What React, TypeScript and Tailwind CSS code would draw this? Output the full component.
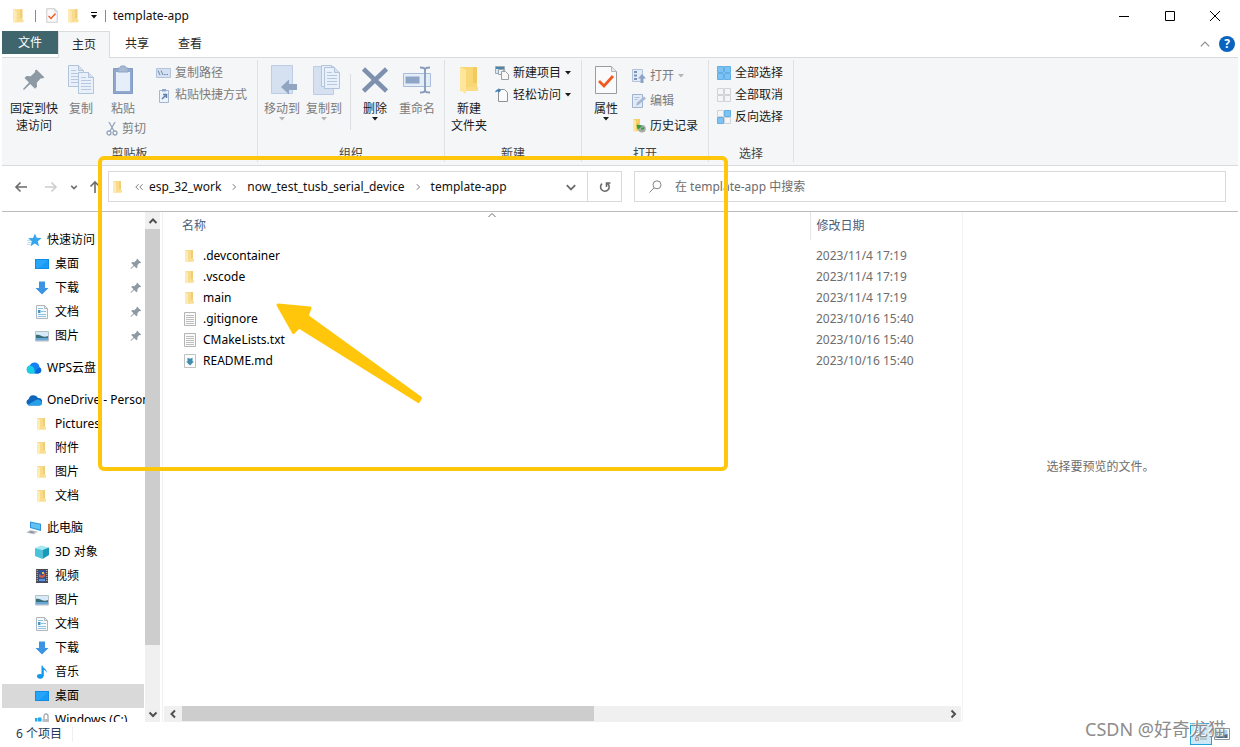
import { useState } from "react";
import type { ReactNode } from "react";

type IconName =
  | "star" | "desktop" | "download" | "doc" | "picture" | "wps" | "onedrive"
  | "folder" | "pc" | "cube" | "video" | "music" | "drive";

interface TreeItem {
  label: string;
  icon: IconName;
  root?: boolean;
  pinned?: boolean;
  selected?: boolean;
}

const tree: TreeItem[][] = [
  [
    { label: "快速访问", icon: "star", root: true },
    { label: "桌面", icon: "desktop", pinned: true },
    { label: "下载", icon: "download", pinned: true },
    { label: "文档", icon: "doc", pinned: true },
    { label: "图片", icon: "picture", pinned: true },
  ],
  [{ label: "WPS云盘", icon: "wps", root: true }],
  [
    { label: "OneDrive - Personal", icon: "onedrive", root: true },
    { label: "Pictures", icon: "folder" },
    { label: "附件", icon: "folder" },
    { label: "图片", icon: "folder" },
    { label: "文档", icon: "folder" },
  ],
  [
    { label: "此电脑", icon: "pc", root: true },
    { label: "3D 对象", icon: "cube" },
    { label: "视频", icon: "video" },
    { label: "图片", icon: "picture" },
    { label: "文档", icon: "doc" },
    { label: "下载", icon: "download" },
    { label: "音乐", icon: "music" },
    { label: "桌面", icon: "desktop", selected: true },
    { label: "Windows (C:)", icon: "drive" },
  ],
];

const files = [
  { name: ".devcontainer", kind: "folder", date: "2023/11/4 17:19" },
  { name: ".vscode", kind: "folder", date: "2023/11/4 17:19" },
  { name: "main", kind: "folder", date: "2023/11/4 17:19" },
  { name: ".gitignore", kind: "text", date: "2023/10/16 15:40" },
  { name: "CMakeLists.txt", kind: "text", date: "2023/10/16 15:40" },
  { name: "README.md", kind: "md", date: "2023/10/16 15:40" },
];

/* ---------- icons ---------- */

function FolderIcon({ className = "size-4" }: { className?: string }) {
  return (
    <svg viewBox="0 0 16 16" className={className}>
      <path d="M3 2h8v11.500H3z" fill="#f8dc8b" />
      <path d="M9 2h2v8H9z" fill="#f1cd74" />
      <path d="M3 2l3 1.500v11L3 13.500z" fill="#fdeab4" />
      <path d="M6 11h6v2.500H6z" fill="#f9df95" />
    </svg>
  );
}

function TextFileIcon() {
  return (
    <svg viewBox="0 0 16 16" className="size-4">
      <path d="M2.500 1.500h11v13h-11z" fill="#fafafa" stroke="#b4b4b4" />
      <path d="M4 4.500h8M4 6.500h8M4 8.500h8M4 10.500h8M4 12.500h8" stroke="#bdbdbd" />
    </svg>
  );
}

function MarkdownFileIcon() {
  return (
    <svg viewBox="0 0 16 16" className="size-4">
      <path d="M2.500 1.500h11v13h-11z" fill="#fdfdfd" stroke="#c0c0c0" />
      <path d="M5.500 4.500l1.500 1h2l1.500-1v4h1.500L8 12.500 4 8.500h1.500z" fill="#3f8cac" />
    </svg>
  );
}

function PinIcon({ className = "size-3" }: { className?: string }) {
  return (
    <svg viewBox="0 0 24 24" className={className} fill="#8d9aa3">
      <path d="M14.500 1.500l8 8-2.500 1-1.200-.3-4 4.500.2 4-2 2-4.800-4.800L2 22l-1-1 6-6.500-4.500-4.600 2-1.800 4.200.2 4.500-4.200-.4-1.300z" />
    </svg>
  );
}

function TreeIcon({ name }: { name: IconName }) {
  if (name === "folder") return <FolderIcon />;
  return (
    <svg viewBox="0 0 16 16" className="size-4 shrink-0">
      {name === "star" && (
        <>
          <path d="M9 1.500l1.700 4.200 5 .3-3.900 3.200 1.200 5-4.200-2.600-4.300 2.600 1.300-5L2 6.300l5-.4z" fill="#35a5ee" />
          <path d="M1 8.500h4M1.500 10.500h3.500M1 12.500h3" stroke="#a5d8f8" strokeWidth=".8" />
        </>
      )}
      {name === "desktop" && (
        <>
          <path d="M1 3h14v10H1z" fill="#0d8ce8" />
          <path d="M2 4h12v8H2z" fill="#26a5fb" />
          <path d="M14 4v8H5z" fill="#189af5" />
        </>
      )}
      {name === "download" && <path d="M5 1.500h6V8h3.500L8 14.500 1.500 8H5z" fill="#3a93e3" />}
      {name === "doc" && (
        <>
          <path d="M2.500 1.500h8l3 3v10h-11z" fill="#f7f9fa" stroke="#b0b6ba" />
          <path d="M10.500 1.500v3h3" fill="none" stroke="#b0b6ba" />
          <path d="M4 4.500h5M7 7.500h5M4 10.500h8M4 12.500h8" stroke="#8cc4e8" />
          <path d="M4 6h2.500v3H4z" fill="#3b9ad6" />
        </>
      )}
      {name === "picture" && (
        <>
          <path d="M1.500 3.500h13v9.500h-13z" fill="#d6eaf8" stroke="#b8bec3" />
          <path d="M2 7c3-1 5 1 7 1.500 2 .5 4-.5 5-.3v2H2z" fill="#3a6e78" />
          <path d="M2 10h12v2.500H2z" fill="#6ca6d2" />
        </>
      )}
      {name === "wps" && (
        <>
          <path d="M4.500 13.500a4 4 0 01-.6-7.900A5 5 0 0113.500 7 3.500 3.500 0 0112.500 13.500z" fill="#1681f5" />
          <path d="M4 13.500a4 4 0 01-.3-7.800c4 0 5.500 3.500 4.500 7.800z" fill="#18d0e2" />
          <path d="M9 13.500c1-4 3-6 5-5.500a3 3 0 01-1.500 5.500z" fill="#0866dc" />
        </>
      )}
      {name === "onedrive" && (
        <>
          <path d="M3 13.500a3.400 3.400 0 01-.3-6.500A5 5 0 0112 6a3.700 3.700 0 011 7.500z" fill="#0f66bd" />
          <path d="M1.500 13L10 8a4 4 0 016 3.300 2.300 2.300 0 01-2.500 2.200H3z" fill="#27a0ea" />
        </>
      )}
      {name === "pc" && (
        <>
          <path d="M4 1.500l11 2.200v7.300L4 8z" fill="#2d92d8" />
          <path d="M5 2.800l9 1.800v5L5 7.300z" fill="#62c1f5" />
          <path d="M0 12.500l4-2.500 8 1.500-4 3z" fill="#c5cbd0" />
          <path d="M2 12.500l3-1.500 4 .8-2 1.500z" fill="#8e979e" />
        </>
      )}
      {name === "cube" && (
        <>
          <path d="M1 4l6-2.500L15 3.500 9 6z" fill="#a7e7f2" />
          <path d="M1 4l7.500 2v9L1 12z" fill="#47c4dc" />
          <path d="M8.500 6L15 3.500V11l-6.500 4z" fill="#159bb9" />
        </>
      )}
      {name === "video" && (
        <>
          <path d="M2 1h12v14H2z" fill="#4a4a50" />
          <path d="M4.500 2h7v12h-7z" fill="#35519a" />
          <path d="M3.200 2v12M12.800 2v12" stroke="#d0d0d0" strokeDasharray="1 1" />
          <path d="M5 6l3 2 3-3v3l-2 2-4-1z" fill="#d7603a" />
          <path d="M5 11h6v2H5z" fill="#5b93d6" />
          <path d="M8 4h2v2H8z" fill="#e5c14d" />
        </>
      )}
      {name === "music" && (
        <>
          <path d="M8.500 1.500c0 3 5 3 4 7.500-.5-2.500-2-3-2.700-3.200V12H7.500V1.500z" fill="#1197ee" />
          <ellipse cx="6.200" cy="12.300" rx="3.200" ry="2.400" fill="#1197ee" />
        </>
      )}
      {name === "drive" && (
        <>
          <path d="M1 6h2.500v3.200H1zM4 5.500h3.500v3.700H4zM1 9.700h2.500V13H1zM4 9.700h3.500v3.800H4z" fill="#20a9ef" />
          <path d="M10 7V4a2 2 0 014 0v3" fill="none" stroke="#a3a9ad" strokeWidth="1.300" />
          <path d="M8.500 7h6.500v7H8.500z" fill="#b7bdc1" />
        </>
      )}
    </svg>
  );
}

function Chevron({ dir, className }: { dir: "up" | "down" | "left" | "right"; className: string }) {
  const paths = {
    up: "M1.500 7L5 3.500 8.500 7",
    down: "M1.500 3.500L5 7l3.500-3.500",
    left: "M7 1.500L3.500 5 7 8.500",
    right: "M3.500 1.500L7 5 3.500 8.500",
  };
  return (
    <svg viewBox="0 0 10 10" className={className} fill="none" stroke="currentColor">
      <path d={paths[dir]} />
    </svg>
  );
}

function Caret({ className = "" }: { className?: string }) {
  return (
    <svg viewBox="0 0 6 4" className={`h-1 w-1.5 shrink-0 ${className}`} fill="currentColor">
      <path d="M0 0h6L3 3.500z" />
    </svg>
  );
}

function CheckDoc({ className }: { className: string }) {
  return (
    <svg viewBox="0 0 24 30" className={className}>
      <path d="M1.500 1.500h16l5 5v22h-21z" fill="#fafafa" stroke="#9b9b9b" />
      <path d="M17.500 1.500v5h5" fill="#e8e8e8" stroke="#b5b5b5" />
      <path d="M5 16l5 5 9-10" fill="none" stroke="#f05a22" strokeWidth="2.800" />
    </svg>
  );
}

const page = (x: number, y: number) => (
  <g transform={`translate(${x} ${y})`}>
    <path d="M.5.500h10l5 5v16H.500z" fill="#e9f0f9" stroke="#b2c3dc" />
    <path d="M10.500.500v5h5" fill="#d5e1f0" stroke="#b2c3dc" />
    <path d="M3 5.500h5M3 8.500h10M3 11.500h10M3 14.500h10M3 17.500h10" stroke="#b5c8e2" />
  </g>
);

/* ---------- ribbon ---------- */

interface BigButtonProps {
  icon: ReactNode;
  lines: string[];
  width?: string;
  caret?: boolean;
  disabled?: boolean;
}

function BigButton({ icon, lines, width = "w-[42px]", caret, disabled }: BigButtonProps) {
  return (
    <button
      disabled={disabled}
      className={`flex shrink-0 flex-col items-center whitespace-nowrap pt-0.5 leading-[17px] ${width} ${disabled ? "text-[#7b7b7b]" : "text-[#1a1a1a]"}`}
    >
      <span className="mb-1 flex h-8 items-center justify-center">{icon}</span>
      {lines.map((l) => (
        <span key={l}>{l}</span>
      ))}
      {caret && <Caret className={disabled ? "text-[#b5b5b5]" : ""} />}
    </button>
  );
}

interface SmallButtonProps {
  icon: ReactNode;
  label: string;
  caret?: boolean;
  disabled?: boolean;
  height?: string;
}

function SmallButton({ icon, label, caret, disabled, height = "h-[22px]" }: SmallButtonProps) {
  return (
    <button
      disabled={disabled}
      className={`flex items-center gap-1 whitespace-nowrap ${height} ${disabled ? "text-[#7b7b7b]" : "text-[#1a1a1a]"}`}
    >
      {icon}
      {label}
      {caret && <Caret className={disabled ? "text-[#b5b5b5]" : ""} />}
    </button>
  );
}

function Group({ label, width, children }: { label: string; width: string; children: ReactNode }) {
  return (
    <section className={`flex shrink-0 flex-col border-r border-[#e0e1e3] ${width}`}>
      <div className="flex flex-1 items-start pt-0.5">{children}</div>
      <h2 className="text-center leading-4 text-[#444]">{label}</h2>
    </section>
  );
}

const BLUE = "#7cc3f3";
const PALE = "#f3f5f7";

function GridIcon({ fills }: { fills: string[] }) {
  const cells = ["M.5.500h6v6h-6z", "M7.500.500h6v6h-6z", "M.5 7.500h6v6h-6z", "M7.500 7.500h6v6h-6z"];
  return (
    <svg viewBox="0 0 14 14" className="size-3.5">
      {cells.map((d, i) => (
        <path key={d} d={d} fill={fills[i]} stroke={fills[i] === BLUE ? "#62b0e6" : "#cfd3d6"} />
      ))}
    </svg>
  );
}

function Ribbon() {
  return (
    <div className="flex h-[108px] shrink-0 overflow-hidden border-b border-[#dadbdc] bg-[#f5f6f7] pb-[3px] pt-0.5">
      <Group label="剪贴板" width="w-64">
        <BigButton width="w-16" lines={["固定到快", "速访问"]} icon={<PinIcon className="size-6" />} />
        <BigButton
          width="w-[30px]"
          disabled
          lines={["复制"]}
          icon={<svg viewBox="0 0 28 30" className="h-[30px] w-7">{page(1, 0)}{page(11, 7)}</svg>}
        />
        <div className="flex w-[60px] flex-col pl-2.5">
          <BigButton
            width="w-[34px]"
            disabled
            lines={["粘贴"]}
            icon={
              <svg viewBox="0 0 22 30" className="h-[30px] w-[22px]">
                <path d="M1.500 3.500h19v25h-19z" fill="#91a8cd" stroke="#829bc4" />
                <path d="M4 7h14v19H4z" fill="#e6eefa" />
                <path d="M6 3h2l1-2h4l1 2h2v4H6z" fill="#a7b8d1" stroke="#8ea5c8" />
              </svg>
            }
          />
          <SmallButton
            disabled
            label="剪切"
            height="h-6"
            icon={
              <svg viewBox="0 0 12 14" className="h-3.5 w-3" fill="none" stroke="#94a5bc" strokeWidth="1.300">
                <path d="M3 0l5 9M9 0L4 9" />
                <circle cx="3" cy="11" r="2" />
                <circle cx="9" cy="11" r="2" />
              </svg>
            }
          />
        </div>
        <div className="flex flex-col">
          <SmallButton
            disabled
            label="复制路径"
            icon={
              <svg viewBox="0 0 15 10" className="h-2.5 w-[15px]">
                <path d="M.5.500h14v9H.500z" fill="#d5e1f1" stroke="#b3c4dd" />
                <path d="M2 2.500l2 4.500M5 2.500L7 7M8 6.500h1.500M10.500 6.500H12" stroke="#6c87ae" />
              </svg>
            }
          />
          <SmallButton
            disabled
            label="粘贴快捷方式"
            icon={
              <svg viewBox="0 0 15 15" className="size-[15px]">
                <path d="M3.500 2.500h9v12h-9z" fill="#edf3fb" stroke="#a3b6d4" />
                <path d="M6 1h4v2.500H6z" fill="#91a8cd" />
                <path d="M6 11l3.500-3.500M7 6.500h3.500V10" fill="none" stroke="#5f7dad" strokeWidth="1.500" />
              </svg>
            }
          />
        </div>
      </Group>

      <Group label="组织" width="w-[187px]">
        <div className="flex pl-[3px]">
          <BigButton
            disabled
            caret
            lines={["移动到"]}
            icon={
              <svg viewBox="0 0 28 30" className="ml-1 h-[30px] w-7">
                <path d="M1.500.500h21v28h-21z" fill="#d5e1f1" stroke="#bdcde4" />
                <path d="M11 22l8-7.500V19h8v6h-8v4.500z" fill="#91a5c3" />
              </svg>
            }
          />
          <BigButton
            disabled
            caret
            lines={["复制到"]}
            icon={
              <svg viewBox="0 0 28 30" className="ml-1.5 h-[30px] w-7">
                <path d="M.5 1.500h20v28H.500z" fill="#d5e1f1" stroke="#bdcde4" />
                {page(8, 0)}
                {page(11, 2)}
              </svg>
            }
          />
        </div>
        <div className="ml-[5px] mr-[3px] mt-3 h-14 w-px bg-[#dcdde0]" />
        <BigButton
          caret
          lines={["删除"]}
          icon={
            <svg viewBox="0 0 26 26" className="size-[26px]" stroke="#7d90ae" strokeWidth="4.500">
              <path d="M1.500 2l23 22M24.500 2l-23 22" />
            </svg>
          }
        />
        <BigButton
          disabled
          lines={["重命名"]}
          icon={
            <svg viewBox="0 0 30 28" className="h-7 w-[30px]">
              <path d="M1.500 7.500h27v13h-27z" fill="#e5edf8" stroke="#a8bbd8" />
              <path d="M3.500 10.500h14v7h-14z" fill="#8fa5c6" />
              <path d="M18 1.500c3 0 5 0 5 3v19c0 3-2 3-5 3M28 1.500c-3 0-5 0-5 3M28 26.500c-3 0-5 0-5-3" fill="none" stroke="#8499bb" strokeWidth="1.800" />
            </svg>
          }
        />
      </Group>

      <Group label="新建" width="w-[137px]">
        <BigButton
          width="w-12"
          lines={["新建", "文件夹"]}
          icon={
            <svg viewBox="0 0 20 28" className="h-7 w-5">
              <path d="M1 1h17v24H1z" fill="#f9d774" />
              <path d="M14 1h4v16h-4z" fill="#f3ca5c" />
              <path d="M1 1l6 3v24l-6-4z" fill="#fee69d" />
              <path d="M7 21h12v4H7z" fill="#fbdc84" />
            </svg>
          }
        />
        <div className="flex flex-col pl-0.5">
          <SmallButton
            caret
            label="新建项目"
            icon={
              <svg viewBox="0 0 14 14" className="size-3.5">
                <path d="M.5.500h9v7H.500z" fill="#d5e9f4" stroke="#9aabb5" />
                <path d="M1 1h8v2H1z" fill="#4d86ab" />
                <path d="M3.500 3.500h5v5h-5z" fill="#edf4f8" stroke="#9aa4ab" />
                <path d="M6.500 5.500h4l3 3v5h-7z" fill="#f8f8f8" stroke="#9ba0a4" />
              </svg>
            }
          />
          <SmallButton
            caret
            label="轻松访问"
            icon={
              <svg viewBox="0 0 14 14" className="size-3.5">
                <path d="M3.500 1.500h6l3 3v9h-9z" fill="#fafafa" stroke="#8d9296" />
                <path d="M0 4.500C.5 2 2 1.500 3.500 1.500V0L6 2.500 3.500 5V3.500C2 3.500 1 3.500 0 4.500z" fill="#3c7db4" />
              </svg>
            }
          />
        </div>
      </Group>

      <Group label="打开" width="w-[127px]">
        <div className="flex pl-0.5">
          <BigButton width="w-[44px]" caret lines={["属性"]} icon={<CheckDoc className="h-[30px] w-6" />} />
        </div>
        <div className="flex flex-col pl-1 pt-px">
          <SmallButton
            disabled
            caret
            height="h-[25px]"
            label="打开"
            icon={
              <svg viewBox="0 0 14 14" className="size-3.5">
                <path d="M.5.500h10v12H.500z" fill="#e3ebf6" stroke="#b3c2d8" />
                <path d="M2 2h3v2H2zM2 5.500h3v2H2zM2 9h3v2H2z" fill="#7994bd" />
                <path d="M8.500 14V9.500H6L10 5l4 4.500h-2.500V14z" fill="#8da3c5" />
              </svg>
            }
          />
          <SmallButton
            disabled
            height="h-[25px]"
            label="编辑"
            icon={
              <svg viewBox="0 0 14 14" className="size-3.5">
                <path d="M.5.500h10v13H.500z" fill="#e3ebf6" stroke="#9fb3d1" />
                <path d="M4 12l1-3.500 7-6 2 2-7 6z" fill="#a7bad5" />
                <path d="M2.500 3.500h5M2.500 5.500h3" stroke="#b3c2d8" />
              </svg>
            }
          />
          <SmallButton
            height="h-[25px]"
            label="历史记录"
            icon={
              <svg viewBox="0 0 14 14" className="size-3.5">
                <path d="M1 0h7v12H1z" fill="#f4cf68" />
                <path d="M1 0l3 1.500V13l-3-1z" fill="#fde6a2" />
                <circle cx="10" cy="9.800" r="3.800" fill="#a3ada5" />
                <path d="M5 6l4.500 1L6 10zM9 10h2.500V8" fill="#2f9e3f" stroke="#2f9e3f" />
              </svg>
            }
          />
        </div>
      </Group>

      <Group label="选择" width="w-[85px]">
        <div className="flex flex-col pl-2">
          <SmallButton label="全部选择" icon={<GridIcon fills={[BLUE, BLUE, BLUE, BLUE]} />} />
          <SmallButton label="全部取消" icon={<GridIcon fills={[PALE, PALE, PALE, PALE]} />} />
          <SmallButton label="反向选择" icon={<GridIcon fills={[PALE, BLUE, BLUE, PALE]} />} />
        </div>
      </Group>
    </div>
  );
}

/* ---------- window parts ---------- */

function TitleBar() {
  return (
    <header className="flex h-[31px] shrink-0 items-center pl-2 text-[#111]">
      <FolderIcon className="size-[18px]" />
      <span className="ml-[7px] h-3 w-px bg-[#8a8a8a]" />
      <CheckDoc className="ml-[10px] h-[15px] w-3" />
      <FolderIcon className="ml-[7px] size-[18px]" />
      <button aria-label="自定义快速访问工具栏" className="ml-[7px] flex w-2 flex-col items-center gap-0.5">
        <span className="h-px w-1.5 bg-black" />
        <Caret />
      </button>
      <span className="ml-[7px] h-3 w-px bg-[#8a8a8a]" />
      <h1 className="ml-[7px]">template-app</h1>
      <div className="ml-auto flex">
        <button aria-label="最小化" className="flex w-[46px] justify-center">
          <svg viewBox="0 0 10 10" className="size-2.5" stroke="#000"><path d="M0 5.500h10" /></svg>
        </button>
        <button aria-label="最大化" className="flex w-[45px] justify-center">
          <svg viewBox="0 0 10 10" className="size-2.5" stroke="#000" fill="none"><path d="M.5.500h9v9h-9z" /></svg>
        </button>
        <button aria-label="关闭" className="flex w-[46px] justify-center">
          <svg viewBox="0 0 10 10" className="size-2.5" stroke="#000"><path d="M0 0l10 10M10 0L0 10" /></svg>
        </button>
      </div>
    </header>
  );
}

function Tabs() {
  return (
    <nav className="flex h-[27px] shrink-0 border-b border-[#dadbdc] text-[#262626]">
      <button className="mb-[3px] w-14 bg-[#3f666c] text-white">文件</button>
      <button className="-mb-px w-[52px] border border-b-0 border-[#dadbdc] bg-[#f5f6f7]">主页</button>
      <button className="w-[54px]">共享</button>
      <button className="w-[52px]">查看</button>
      <div className="ml-auto flex items-center gap-2 pr-[3px]">
        <button aria-label="最小化功能区" className="text-[#8c8c8c]">
          <Chevron dir="up" className="size-3" />
        </button>
        <button aria-label="帮助" className="size-4 rounded-full bg-[#0a63be] text-xs font-bold leading-4 text-white">
          ?
        </button>
      </div>
    </nav>
  );
}

function NavBar() {
  const [query, setQuery] = useState("");
  const crumbs = ["esp_32_work", "now_test_tusb_serial_device", "template-app"];

  return (
    <div className="flex h-[46px] shrink-0 items-center border-b border-[#bcbcbc] pb-1 pl-3 pr-3">
      <div className="flex w-[94px] shrink-0 items-center text-[#6b6b6b]">
        <button aria-label="后退">
          <svg viewBox="0 0 14 14" className="size-3.5" fill="none" stroke="currentColor" strokeWidth="1.600"><path d="M13 7H2M6.500 2.500L2 7l4.500 4.500" /></svg>
        </button>
        <button aria-label="前进" className="ml-4 text-[#cdcdcd]">
          <svg viewBox="0 0 14 14" className="size-3.5" fill="none" stroke="currentColor" strokeWidth="1.600"><path d="M1 7h11M7.500 2.500L12 7l-4.500 4.500" /></svg>
        </button>
        <button aria-label="最近浏览的位置" className="ml-3">
          <Chevron dir="down" className="size-2 stroke-2" />
        </button>
        <button aria-label="上移" className="ml-2.5">
          <svg viewBox="0 0 14 14" className="size-3.5" fill="none" stroke="currentColor" strokeWidth="1.600"><path d="M7 13V2M2.500 6.500L7 2l4.500 4.500" /></svg>
        </button>
      </div>
      <div className="flex h-[31px] flex-[512] items-center border border-[#d9d9d9]">
        <FolderIcon className="ml-px size-4 shrink-0" />
        <span className="ml-[7px] mr-1 flex text-[#5b5b5b]">
          <Chevron dir="left" className="-mr-1 size-2" />
          <Chevron dir="left" className="size-2" />
        </span>
        {crumbs.map((crumb, i) => (
          <span key={crumb} className="flex items-center whitespace-nowrap">
            {i > 0 && <Chevron dir="right" className="mx-[9px] size-2 text-[#5b5b5b]" />}
            <a href="#" className="text-[#111]">{crumb}</a>
          </span>
        ))}
        <button aria-label="以前的位置" className="ml-auto flex h-full w-8 items-center justify-center text-[#6b6b6b]">
          <Chevron dir="down" className="size-3 stroke-[1.5px]" />
        </button>
        <button aria-label="刷新" className="flex h-full w-[34px] items-center justify-center border-l border-[#d9d9d9]">
          <svg viewBox="0 0 12 12" className="size-3" fill="none" stroke="#6b6b6b" strokeWidth="1.600">
            <path d="M3 2.700A4.300 4.300 0 1 0 8.500 2.500M7.500 6V2h4" />
          </svg>
        </button>
      </div>
      <label className="ml-3 flex h-[31px] flex-[576] items-center border border-[#d9d9d9] pl-3.5">
        <svg viewBox="0 0 13 13" className="size-[13px] shrink-0" fill="none" stroke="#858585">
          <circle cx="8" cy="4.800" r="4" />
          <path d="M5 8L.5 12.500" />
        </svg>
        <input
          value={query}
          onChange={(e) => setQuery(e.target.value)}
          placeholder="在 template-app 中搜索"
          aria-label="搜索"
          className="ml-[13px] min-w-0 flex-1 outline-none placeholder:text-[#6d6d6d]"
        />
      </label>
    </div>
  );
}

function Sidebar() {
  return (
    <aside className="flex w-[161px] shrink-0 border-r border-[#f0f0f0]">
      <div className="flex min-w-0 flex-1 flex-col gap-2 overflow-hidden pt-4">
        {tree.map((section, i) => (
          <ul key={i} className="shrink-0">
            {section.map((item) => (
              <li key={item.label} className={`mr-px flex h-6 items-center ${item.selected ? "bg-[#d9d9d9]" : ""}`}>
                <a
                  href="#"
                  className={`flex min-w-0 flex-1 items-center gap-[5px] whitespace-nowrap text-black ${item.root ? "pl-6" : "pl-8"}`}
                >
                  <TreeIcon name={item.icon} />
                  <span>{item.label}</span>
                </a>
                {item.pinned && <PinIcon className="mr-0.5 size-3 shrink-0" />}
              </li>
            ))}
          </ul>
        ))}
      </div>
      <div className="mr-0.5 flex w-[15px] shrink-0 flex-col bg-[#f0f0f0] text-[#505050]">
        <button aria-label="向上滚动" className="flex h-[17px] items-center justify-center">
          <Chevron dir="up" className="size-2.5 stroke-2" />
        </button>
        <div className="flex-[416] bg-[#cdcdcd]" />
        <div className="flex-[61]" />
        <button aria-label="向下滚动" className="flex h-4 items-center justify-center">
          <Chevron dir="down" className="size-2.5 stroke-2" />
        </button>
      </div>
    </aside>
  );
}

function FileList() {
  return (
    <main className="flex min-w-0 flex-1 flex-col px-px">
      <table className="w-full table-fixed border-collapse text-left">
        <thead>
          <tr className="h-7 text-[#4c607a]">
            <th className="relative pl-[18px] font-normal">
              名称
              <Chevron dir="up" className="absolute -top-0.5 left-1/2 size-2.5 text-[#6d6d6d]" />
            </th>
            <th className="w-[151px] border-l border-[#e5e5e5] pl-1.5 font-normal">修改日期</th>
          </tr>
        </thead>
        <tbody>
          <tr className="h-[5px]" aria-hidden="true" />
          {files.map((file) => (
            <tr key={file.name} className="h-[21px]">
              <td className="pl-[18px] text-black">
                <span className="flex items-center gap-[5px]">
                  {file.kind === "folder" && <FolderIcon />}
                  {file.kind === "text" && <TextFileIcon />}
                  {file.kind === "md" && <MarkdownFileIcon />}
                  {file.name}
                </span>
              </td>
              <td className="pl-1.5 text-[#6d6d6d]">{file.date}</td>
            </tr>
          ))}
        </tbody>
      </table>
      <div className="mt-auto flex h-4 bg-[#f0f0f0] text-[#505050]">
        <button aria-label="向左滚动" className="flex w-[18px] items-center justify-center">
          <Chevron dir="left" className="size-2.5 stroke-2" />
        </button>
        <div className="mb-px flex-[412] bg-[#cdcdcd]" />
        <div className="flex-[350]" />
        <button aria-label="向右滚动" className="flex w-[17px] items-center justify-center">
          <Chevron dir="right" className="size-2.5 stroke-2" />
        </button>
      </div>
    </main>
  );
}

function StatusBar() {
  return (
    <footer className="relative flex h-[25px] shrink-0 items-center pb-px pl-3.5 text-[#1e395b]">
      <span className="border-r border-[#f0f0f0] pr-2.5">6 个项目</span>
      <div className="ml-auto flex items-center gap-0.5 pr-2">
        <button aria-label="详细信息" className="flex size-[22px] items-center justify-center border border-[#26a0da] bg-[#cce8f7]">
          <svg viewBox="0 0 14 14" className="size-3.5" fill="#fff" stroke="#a0a5a9">
            <path d="M1.500.500h3v3h-3zM1.500 5.500h3v3h-3zM1.500 10.500h3v3h-3z" />
            <path d="M6 2h7M6 7h7M6 12h7" />
            <path d="M2.500 12h1" stroke="#d33" />
          </svg>
        </button>
        <button aria-label="大缩略图">
          <svg viewBox="0 0 16 12" className="h-3 w-4">
            <path d="M.5.500h15v11H.500z" fill="#fff" stroke="#8d9296" />
            <path d="M2.500 2h11v8h-11z" fill="#a8d3ef" />
            <path d="M2.500 6c4-1 7 2 11 0v4h-11z" fill="#3d6f8c" />
          </svg>
        </button>
      </div>
      {/* watermark */}
      <span className="absolute bottom-1.5 right-3 whitespace-nowrap text-lg leading-6 text-[#8c8c8c] [text-shadow:-1px_-1px_0_#fff]">
        CSDN @好奇龙猫
      </span>
    </footer>
  );
}

/* highlight frame and pointer drawn over the window */
function Annotation() {
  return (
    <div className="pointer-events-none absolute left-[98px] top-[156px] h-[315px] w-[630px] rounded-md border-4 border-[#ffc60b]">
      <svg viewBox="275 302 148 102" className="absolute left-[173px] top-[142px] h-[102px] w-[148px]">
        <path
          d="M278 305l32 3-3 8 113.500 82-2 3.500L299 327l-5.500 5.500z"
          fill="#ffc60b"
          stroke="#ffc60b"
          strokeWidth="3"
          strokeLinejoin="round"
        />
      </svg>
    </div>
  );
}

export default function App() {
  return (
    <div className="relative flex h-screen flex-col overflow-hidden bg-white pl-0.5 pr-0.5 font-['Noto_Sans','Noto_Sans_CJK_SC',sans-serif] text-xs">
      <TitleBar />
      <Tabs />
      <Ribbon />
      <NavBar />
      <div className="flex min-h-0 flex-1">
        <Sidebar />
        <FileList />
        <section className="flex w-[276px] shrink-0 items-center justify-center border-l border-[#f3f3f3] text-[#6d6d6d]">
          选择要预览的文件。
        </section>
      </div>
      <StatusBar />
      <Annotation />
    </div>
  );
}
